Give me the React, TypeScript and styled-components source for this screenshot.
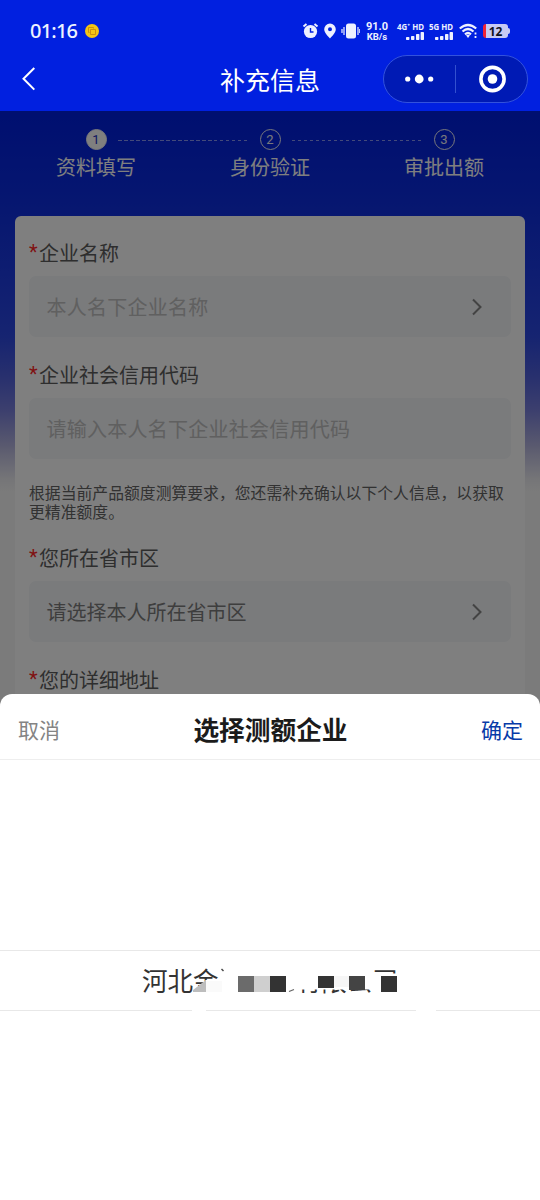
import React from "react";
import styled, { createGlobalStyle } from "styled-components";

const Global = createGlobalStyle`
  * { box-sizing: border-box; }
  body { margin: 0; font-family: Roboto, "Noto Sans CJK SC", sans-serif; }
`;

const Screen = styled.div`
  position: relative;
  width: 540px;
  height: 1200px;
  overflow: hidden;
  background: #f8f8f8;
  display: flex;
  flex-direction: column;
`;

const Header = styled.header`
  height: 111px;
  flex: none;
  background: #0120e0;
  color: #fff;
`;

const StatusBar = styled.div`
  height: 54px;
  padding: 8px 32px 0 30px;
  display: flex;
  align-items: center;
  justify-content: space-between;
`;

const TimeGroup = styled.div`
  display: flex;
  align-items: center;
  gap: 8px;
`;

const Clock = styled.span`
  font: 500 20px/24px "Noto Sans", sans-serif;
  letter-spacing: -0.8px;
  width: 47px;
  white-space: nowrap;
  color: #eef3ff;
`;

const StatusIcons = styled.div`
  display: flex;
  align-items: center;
  color: #eef1ff;
`;

const Speed = styled.div`
  width: 26px;
  margin-left: 4px;
  display: flex;
  flex-direction: column;
  align-items: center;
  font: 700 11px/11px Roboto, sans-serif;
  white-space: nowrap;
`;

const SpeedUnit = styled.span`
  font-size: 9.5px;
  line-height: 10px;
`;

const Signal = styled.div<{ $w: number; $ml: number }>`
  width: ${(p) => p.$w}px;
  margin-left: ${(p) => p.$ml}px;
  display: flex;
  flex-direction: column;
  align-items: flex-end;
  font: 700 7.9px/8px "Noto Sans", sans-serif;
  white-space: nowrap;
  svg { margin-top: 1px; }
`;

const Battery = styled.div`
  width: 25px;
  height: 14px;
  margin-left: 5px;
  border-radius: 3px;
  background: linear-gradient(90deg, #f02338 3px, #c6caf4 3px);
  color: #10121c;
  font: 700 12px/15px "Noto Sans", sans-serif;
  text-align: center;
`;

const BatteryTip = styled.span`
  width: 2px;
  height: 6px;
  margin-right: -2px;
  border-radius: 0 2px 2px 0;
  background: #c6caf4;
`;

const NavBar = styled.div`
  height: 49px;
  display: grid;
  grid-template-columns: 158px 1fr 158px;
  align-items: center;
  padding: 0 12px;
`;

const NavTitle = styled.h1`
  margin: 0;
  font-size: 25px;
  font-weight: 400;
  line-height: 36px;
  text-align: center;
  padding-top: 6px;
`;

const Capsule = styled.div`
  width: 145px;
  height: 48px;
  border: 1px solid #3352dc;
  border-radius: 24px;
  background: #001ab4;
  justify-self: end;
  display: flex;
  align-items: center;
`;

const CapsuleHalf = styled.div`
  flex: 1;
  display: flex;
  justify-content: center;
  & + & { border-left: 1px solid #3350cf; height: 28px; align-items: center; }
`;

const Main = styled.main`
  flex: 1;
  padding: 18px 15px 0;
  background: linear-gradient(#001ee0 0, #0a2be0 80px, #1c3ae2 160px, #2c48e2 225px, #5060dc 265px, #7a80dc 300px, #b4b4de 335px, #ebebf0 368px, #f6f6f6 380px, #f6f6f6 100%);
`;

const Steps = styled.ol`
  list-style: none;
  margin: 0 -6px;
  padding: 0;
  height: 87px;
  display: grid;
  grid-template-columns: repeat(3, 1fr);
`;

const Step = styled.li`
  position: relative;
  display: flex;
  flex-direction: column;
  align-items: center;
  color: #fff;
  font-size: 20px;
  line-height: 28px;

  &:not(:first-child)::before {
    content: "";
    position: absolute;
    top: 11px;
    left: -65px;
    width: 130px;
    height: 1px;
    background: repeating-linear-gradient(90deg, #8795f5 0 3.5px, transparent 3.5px 6px);
  }
`;

const StepDot = styled.span<{ $active?: boolean }>`
  width: 21px;
  height: 21px;
  margin-bottom: 4px;
  border-radius: 50%;
  border: 1.5px solid #f0f0f8;
  background: ${(p) => (p.$active ? "#fff" : "transparent")};
  color: ${(p) => (p.$active ? "#1a2ec0" : "#f0f0f8")};
  font-size: 13px;
  line-height: 20px;
  text-align: center;
`;

const Card = styled.section`
  height: 984px;
  padding: 20px 14px 0;
  border-radius: 6px;
  background: #fff;
`;

const Label = styled.label`
  display: flex;
  height: 34px;
  margin-bottom: 6px;
  font-size: 20px;
  line-height: 36px;
  color: #5c5c5c;
`;

const Required = styled.span`
  width: 10px;
  line-height: 33px;
  color: #ff2727;
`;

const Field = styled.div<{ $filled?: boolean; $gap: number }>`
  height: 61px;
  margin-bottom: ${(p) => p.$gap}px;
  padding: 0 27px 0 17.5px;
  border-radius: 7px;
  background: #f4f6f9;
  display: flex;
  align-items: center;
  justify-content: space-between;
  font-size: 20px;
  letter-spacing: ${(p) => (p.$filled ? 0 : 0.25)}px;
  color: ${(p) => (p.$filled ? "#7c7c7c" : "#c0c0c0")};
`;

const Note = styled.p`
  margin: 0 0 19px;
  padding-top: 1px;
  font-size: 15.83px;
  line-height: 18.5px;
  white-space: nowrap;
  color: #646464;
`;

const Backdrop = styled.div`
  position: absolute;
  inset: 111px 0 0;
  background: rgba(0, 0, 0, 0.5);
`;

const Sheet = styled.section`
  position: absolute;
  inset: 694px 0 0;
  border-radius: 12px 12px 0 0;
  background: #fff;
  display: flex;
  flex-direction: column;
`;

const SheetHeader = styled.div`
  height: 66px;
  padding: 9px 17px 0 18px;
  border-bottom: 1px solid #eee;
  display: flex;
  align-items: center;
  justify-content: space-between;
`;

const SheetAction = styled.button<{ $primary?: boolean }>`
  border: 0;
  padding: 0;
  background: none;
  font: 400 21px/30px Roboto, "Noto Sans CJK SC", sans-serif;
  color: ${(p) => (p.$primary ? "#073aa8" : "#848484")};
`;

const SheetTitle = styled.h2`
  margin: 0;
  font-size: 25.7px;
  line-height: 36px;
  font-weight: 700;
  color: #1b1b1b;
`;

const Picker = styled.div`
  flex: 1;
  padding-top: 190px;
`;

const PickerRow = styled.div`
  position: relative;
  height: 61px;
  padding-top: 2px;
  border-top: 1px solid #e8e8e8;
  border-bottom: 1px solid #e8e8e8;
  display: flex;
  align-items: center;
  justify-content: center;
  font-size: 25.6px;
  line-height: 36px;
  color: #333;
`;

const HiddenName = styled.span`
  width: 77px;
`;

const Redaction = styled.svg`
  position: absolute;
  left: 185px;
  top: 4px;
`;

const Chevron = () => (
  <svg width="14" height="20" viewBox="0 0 14 20" fill="none" stroke="#868686" strokeWidth="2">
    <path d="M3 2.5 10.5 10 3 17.5" />
  </svg>
);

const Bars = () => (
  <svg width="18" height="8" viewBox="0 0 18 8" fill="currentColor">
    <rect x="0" y="5" width="3.4" height="3" rx=".7" />
    <rect x="5" y="4" width="3.4" height="4" rx=".7" />
    <rect x="10" y="2" width="3.4" height="6" rx=".7" />
    <rect x="14.6" y="0" width="3.4" height="8" rx=".7" />
  </svg>
);

export default function App() {
  return (
    <Screen>
      <Global />
      <Header>
        <StatusBar>
          <TimeGroup>
            <Clock>01:16</Clock>
            <svg width="14" height="14" viewBox="0 0 14 14">
              <circle cx="7" cy="7" r="7" fill="#f4c514" />
              <path d="M4.500 8.500H3.500V3.500H8.500V4.500M5.500 5.500h5v5h-5z" fill="none" stroke="#c98a0c" strokeWidth=".9" />
            </svg>
          </TimeGroup>
          <StatusIcons>
            <svg width="58" height="18" viewBox="0 0 58 18" fill="currentColor">
              <circle cx="8.500" cy="9.500" r="6.600" />
              <path d="M1.500 4.500 4.500 2M15.500 4.500 12.500 2" stroke="currentColor" strokeWidth="2" />
              <path d="M8.500 6v4h3" fill="none" stroke="#0120e0" strokeWidth="1.400" />
              <path fillRule="evenodd" d="M28 1.500a5.800 5.800 0 0 1 5.800 5.800c0 3.500-3.700 7-5.800 9.200-2.100-2.200-5.800-5.700-5.800-9.200a5.800 5.800 0 0 1 5.800-5.800zm0 3.800a2 2 0 1 0 0 4 2 2 0 0 0 0-4z" />
              <rect x="44" y="1.500" width="10" height="15" rx="2.500" />
              <path d="M42 5v8M40 7v4M56 5v8M57.800 7v4" stroke="currentColor" strokeWidth="1.200" />
            </svg>
            <Speed>91.0<SpeedUnit>KB/s</SpeedUnit></Speed>
            <Signal $w={29} $ml={5}>4G⁺ HD<Bars /></Signal>
            <Signal $w={25} $ml={4}>5G HD<Bars /></Signal>
            <svg width="19" height="16" viewBox="0 0 19 16" fill="none" stroke="currentColor" strokeWidth="2.200" style={{ marginLeft: 6 }}>
              <path d="M.8 5.500Q9 -1.500 17.200 5.500M3.500 8.500Q9 3.500 14.500 8.500M6 11.300Q9 8.700 12 11.300" />
              <path d="m7 12.300 2 2.700 2-2.700q-2-1.200-4 0z" fill="currentColor" stroke="none" />
              <path d="M16.500 9.500v2M16.500 13v2" strokeWidth="1.800" />
            </svg>
            <Battery>12</Battery>
            <BatteryTip />
          </StatusIcons>
        </StatusBar>
        <NavBar>
          <svg width="30" height="26" viewBox="0 0 30 26" fill="none" stroke="#fff" strokeWidth="2">
            <path d="M22.300 2 11.500 12.800 22.300 23.600" />
          </svg>
          <NavTitle>补充信息</NavTitle>
          <Capsule>
            <CapsuleHalf>
              <svg width="30" height="12" viewBox="0 0 30 12" fill="#fff">
                <circle cx="2.700" cy="6" r="2.600" />
                <circle cx="14.200" cy="6" r="4.400" />
                <circle cx="25.700" cy="6" r="2.600" />
              </svg>
            </CapsuleHalf>
            <CapsuleHalf>
              <svg width="28" height="28" viewBox="0 0 28 28">
                <circle cx="14.500" cy="14" r="11.600" fill="none" stroke="#fff" strokeWidth="3.600" />
                <circle cx="14.500" cy="14" r="4.800" fill="#fff" />
              </svg>
            </CapsuleHalf>
          </Capsule>
        </NavBar>
      </Header>
      <Main>
        <Steps>
          <Step><StepDot $active>1</StepDot>资料填写</Step>
          <Step><StepDot>2</StepDot>身份验证</Step>
          <Step><StepDot>3</StepDot>审批出额</Step>
        </Steps>
        <Card>
          <Label><Required>*</Required>企业名称</Label>
          <Field $gap={21}>本人名下企业名称<Chevron /></Field>
          <Label><Required>*</Required>企业社会信用代码</Label>
          <Field $gap={25}>请输入本人名下企业社会信用代码</Field>
          <Note>根据当前产品额度测算要求，您还需补充确认以下个人信息，以获取<br />更精准额度。</Note>
          <Label><Required>*</Required>您所在省市区</Label>
          <Field $gap={21} $filled>请选择本人所在省市区<Chevron /></Field>
          <Label><Required>*</Required>您的详细地址</Label>
        </Card>
      </Main>
      <Backdrop />
      <Sheet>
        <SheetHeader>
          <SheetAction>取消</SheetAction>
          <SheetTitle>选择测额企业</SheetTitle>
          <SheetAction $primary>确定</SheetAction>
        </SheetHeader>
        <Picker>
          <PickerRow>
            河北金<HiddenName />有限公司
            <Redaction width="260" height="60" viewBox="185 955 260 60">
              <path fill="#fff" d="M190 994 206 980h16v14zM287 964h87v25.500h-87zM373 973.500h26v21h-26z" />
              <path fill="#bdbdbd" d="M193 992v-2l13-10v12z" />
              <path fill="#fafafa" d="M206 981h16v11h-16z" />
              <path d="m221.500 969 2 2" stroke="#444" strokeWidth="1.500" />
              <path fill="#6b6b6b" d="M238 976h16v16h-16z" />
              <path fill="#cfcfcf" d="M254 976h16v16h-16z" />
              <path fill="#333" d="M270 976h16v16h-16zM318 976h16v12h-16zM381 976h16v16h-16z" />
              <path fill="#f6f6f6" d="M334 976h15v11h-15z" />
              <path fill="#444" d="M349 976h16v14h-16z" />
              <path d="m289 991.500 5-2" stroke="#666" strokeWidth="1.200" />
              <path fill="#fff" d="M192 1009h14v3h-14zM416 1009h20v3h-20z" />
            </Redaction>
          </PickerRow>
        </Picker>
      </Sheet>
    </Screen>
  );
}
